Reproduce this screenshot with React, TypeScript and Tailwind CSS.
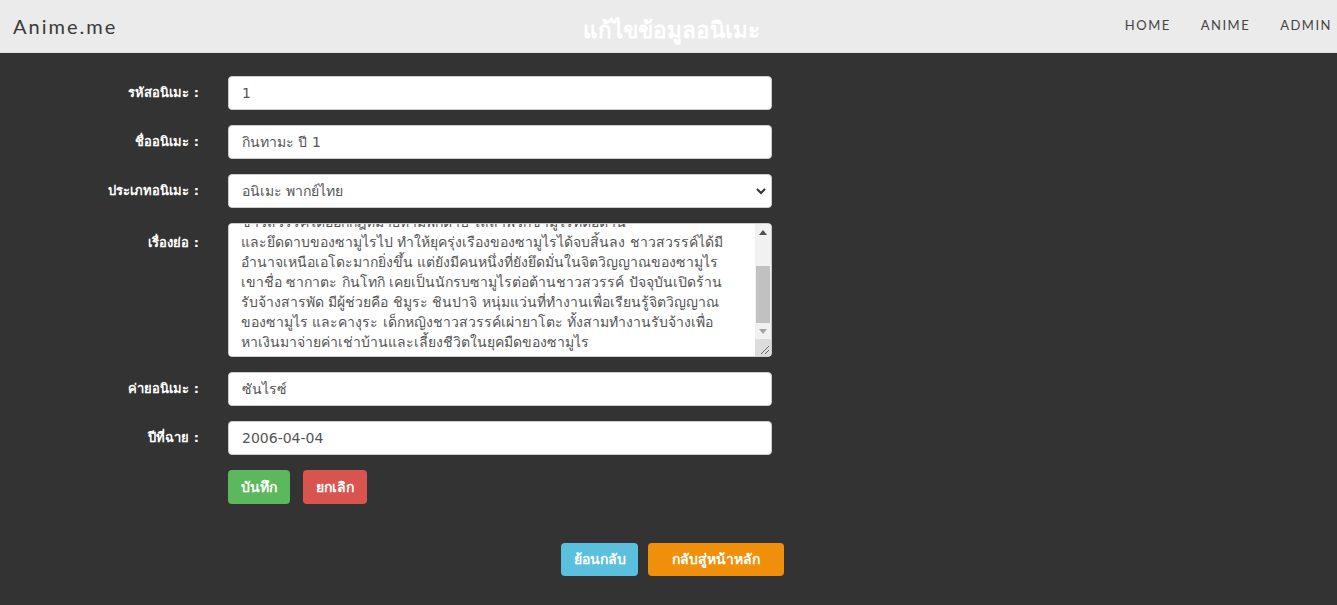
import React, { useEffect, useRef } from "react";

const synopsis = [
  "เรื่องราวเกิดขึ้นในยุคเอโดะ เมื่อเหล่ามนุษย์ต่างดาวที่ถูกเรียกว่า",
  "ชาวสวรรค์ได้บุกเข้ามายังโลก รัฐบาลโชกุนยอมจำนนต่อชาวสวรรค์",
  "ชาวสวรรค์ได้ออกกฎหมายห้ามพกดาบ ไล่ล่าพวกซามูไรที่ต่อต้าน",
  "และยึดดาบของซามูไรไป ทำให้ยุครุ่งเรืองของซามูไรได้จบสิ้นลง ชาวสวรรค์ได้มี",
  "อำนาจเหนือเอโดะมากยิ่งขึ้น แต่ยังมีคนหนึ่งที่ยังยึดมั่นในจิตวิญญาณของซามูไร",
  "เขาชื่อ ซากาตะ กินโทกิ เคยเป็นนักรบซามูไรต่อต้านชาวสวรรค์ ปัจจุบันเปิดร้าน",
  "รับจ้างสารพัด มีผู้ช่วยคือ ชิมูระ ชินปาจิ หนุ่มแว่นที่ทำงานเพื่อเรียนรู้จิตวิญญาณ",
  "ของซามูไร และคางุระ เด็กหญิงชาวสวรรค์เผ่ายาโตะ ทั้งสามทำงานรับจ้างเพื่อ",
  "หาเงินมาจ่ายค่าเช่าบ้านและเลี้ยงชีวิตในยุคมืดของซามูไร",
  "",
  "",
].join("\n");

const FONT = "font-['Tahoma','DejaVu_Sans','Noto_Sans',sans-serif]";

function Label({ children }: { children: React.ReactNode }) {
  return (
    <div className={`w-[200px] shrink-0 text-right pr-[1px] text-[13px] font-bold text-white ${FONT}`}>
      {children}
    </div>
  );
}

const inputCls =
  "w-[544px] h-[34px] rounded-[4px] border border-[#cccccc] bg-white px-[13px] text-[14px] text-[#555555] outline-none " +
  FONT;

function FakeScrollbar() {
  return (
    <div className="flex w-[16px] shrink-0 flex-col bg-[#f1f1f1]">
      <div className="flex h-[17px] items-center justify-center">
        <svg width="8" height="5" viewBox="0 0 8 5">
          <path d="M0 5 L4 0 L8 5 Z" fill="#505050" />
        </svg>
      </div>
      <div className="flex flex-1 flex-col px-[1px]">
        <div className="h-[25px]" />
        <div className="h-[57px] bg-[#c1c1c1]" />
      </div>
      <div className="flex h-[17px] items-center justify-center">
        <svg width="8" height="5" viewBox="0 0 8 5">
          <path d="M0 0 L4 5 L8 0 Z" fill="#a3a3a3" />
        </svg>
      </div>
      <div className="relative h-[17px] bg-[#dcdcdc]">
        <svg className="absolute right-[1px] bottom-[1px]" width="11" height="11" viewBox="0 0 11 11">
          <path d="M10 2 L2 10 M10 6 L6 10" stroke="#6b6b6b" strokeWidth="1" />
        </svg>
      </div>
    </div>
  );
}

export default function App() {
  const taRef = useRef<HTMLTextAreaElement>(null);
  useEffect(() => {
    if (taRef.current) taRef.current.scrollTop = 58;
  }, []);

  return (
    <div className={`min-h-[605px] w-full bg-[#333333] ${FONT}`}>
      <nav className="relative flex h-[53px] items-center justify-between bg-[#ebebeb] border-b border-[#e0e0e0]">
        <div className="pl-[13px] text-[20px] tracking-[2px] text-[#3a3a3a] font-['Lato','Open_Sans',sans-serif]">
          Anime.me
        </div>
        <div className="absolute left-0 right-0 top-[14px] pl-[6px] text-center text-[22.5px] font-bold text-white pointer-events-none">
          แก้ไขข้อมูลอนิเมะ
        </div>
        <div className="flex items-center gap-[30px] pr-[5px] text-[13px] tracking-[1.5px] text-[#444444] font-['Lato','Open_Sans',sans-serif]">
          <span>HOME</span>
          <span>ANIME</span>
          <span>ADMIN</span>
        </div>
      </nav>

      <div className="flex flex-col pt-[23px]">
        <div className="flex items-center gap-[28px] h-[34px]">
          <Label>รหัสอนิเมะ :</Label>
          <input className={inputCls} defaultValue="1" />
        </div>
        <div className="flex items-center gap-[28px] h-[34px] mt-[15px]">
          <Label>ชื่ออนิเมะ :</Label>
          <input className={inputCls} defaultValue="กินทามะ ปี 1" />
        </div>
        <div className="flex items-center gap-[28px] h-[34px] mt-[15px]">
          <Label>ประเภทอนิเมะ :</Label>
          <div className="relative">
            <select className={inputCls + " appearance-none pl-[13px]"} defaultValue="a">
              <option value="a">อนิเมะ พากย์ไทย</option>
              <option value="b">อนิเมะ ซับไทย</option>
            </select>
            <svg
              className="pointer-events-none absolute right-[5px] top-[12px]"
              width="12"
              height="10"
              viewBox="0 0 12 10"
            >
              <path d="M2 3 L6 7 L10 3" stroke="#333" strokeWidth="2" fill="none" />
            </svg>
          </div>
        </div>
        <div className="flex items-start gap-[28px] mt-[15px]">
          <div className="pt-[10px]">
            <Label>เรื่องย่อ :</Label>
          </div>
          <div className="flex h-[134px] w-[544px] overflow-hidden rounded-[4px] border border-[#cccccc] bg-white">
            <textarea
              ref={taRef}
              className={
                "h-full flex-1 resize-none bg-white pl-[12px] pr-[4px] py-[6px] text-[14px] leading-[20px] text-[#555555] outline-none whitespace-pre overflow-hidden " +
                FONT
              }
              defaultValue={synopsis}
            />
            <FakeScrollbar />
          </div>
        </div>
        <div className="flex items-center gap-[28px] h-[34px] mt-[15px]">
          <Label>ค่ายอนิเมะ :</Label>
          <input className={inputCls} defaultValue="ซันไรซ์" />
        </div>
        <div className="flex items-center gap-[28px] h-[34px] mt-[15px]">
          <Label>ปีที่ฉาย :</Label>
          <input className={inputCls} defaultValue="2006-04-04" />
        </div>
        <div className="flex items-center gap-[13px] mt-[15px] pl-[228px]">
          <button className="h-[34px] w-[62px] rounded-[4px] bg-[#5cb85c] text-white text-[14px] font-bold">
            บันทึก
          </button>
          <button className="h-[34px] w-[64px] rounded-[4px] bg-[#d9534f] text-white text-[14px] font-bold">
            ยกเลิก
          </button>
        </div>
        <div className="flex justify-center gap-[10px] mt-[39px] pl-[8px]">
          <button className="h-[33px] w-[77px] rounded-[4px] bg-[#5bc0de] text-white text-[14px] font-bold">
            ย้อนกลับ
          </button>
          <button className="h-[33px] w-[136px] rounded-[4px] bg-[#f0900a] text-white text-[14px] font-bold">
            กลับสู่หน้าหลัก
          </button>
        </div>
      </div>
    </div>
  );
}
